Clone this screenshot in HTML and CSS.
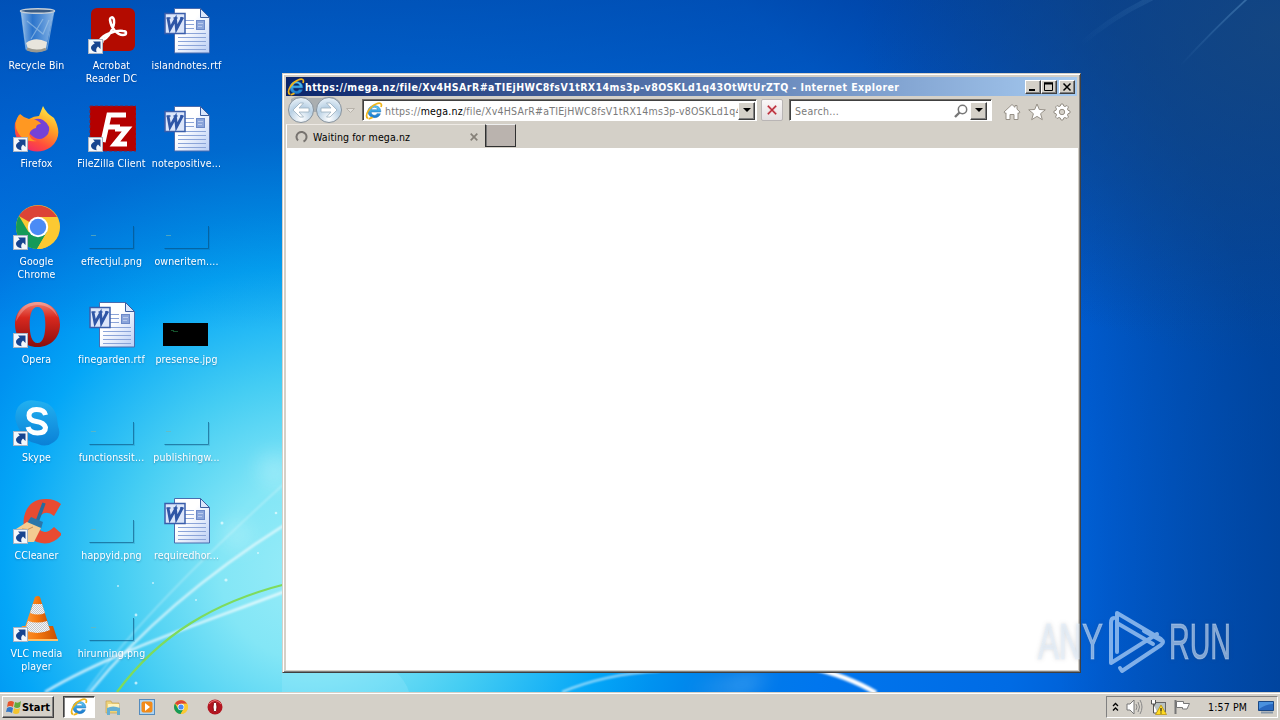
FILE: index.html
```html
<!DOCTYPE html>
<html lang="en">
<head>
<meta charset="utf-8">
<title>Desktop</title>
<link rel="stylesheet" href="styles.css">
</head>
<body>
<svg class="defs" width="0" height="0" aria-hidden="true">
  <defs>
    <linearGradient id="gPaper" x1="0" y1="0" x2="1" y2="1"><stop offset=".4" stop-color="#fff"/><stop offset="1" stop-color="#b9cdf5"/></linearGradient>
    <linearGradient id="gFox" x1=".8" y1="0" x2=".3" y2="1"><stop offset="0" stop-color="#fff04a"/><stop offset=".4" stop-color="#ffa126"/><stop offset=".75" stop-color="#ff4d3c"/><stop offset="1" stop-color="#f0286a"/></linearGradient>
    <linearGradient id="gOpera" x1="0" y1="0" x2="0" y2="1"><stop offset="0" stop-color="#f08070"/><stop offset=".35" stop-color="#d8281e"/><stop offset="1" stop-color="#8a0d0d"/></linearGradient>
    <linearGradient id="gSkype" x1="0" y1="0" x2="0" y2="1"><stop offset="0" stop-color="#22b0f0"/><stop offset="1" stop-color="#0a80d6"/></linearGradient>
    <linearGradient id="gBin" x1="0" y1="0" x2="1" y2="0"><stop offset="0" stop-color="#c4def5" stop-opacity=".8"/><stop offset=".35" stop-color="#4a8bd6" stop-opacity=".6"/><stop offset="1" stop-color="#b4d4f2" stop-opacity=".8"/></linearGradient>
    <linearGradient id="gCone" x1="0" y1="0" x2="1" y2="0"><stop offset="0" stop-color="#ffa040"/><stop offset=".5" stop-color="#f57a10"/><stop offset="1" stop-color="#c84e00"/></linearGradient>
    <radialGradient id="gNav" cx=".5" cy=".85" r=".8"><stop offset="0" stop-color="#fff"/><stop offset=".6" stop-color="#b8d0e4"/><stop offset="1" stop-color="#e4eef6"/></radialGradient>
    <linearGradient id="gIE" x1="0" y1="0" x2="0" y2="1"><stop offset="0" stop-color="#5fd0f8"/><stop offset="1" stop-color="#1474cc"/></linearGradient>
    <pattern id="dither" width="2" height="2" patternUnits="userSpaceOnUse"><rect width="2" height="2" fill="#f6f6f6"/><rect width="1" height="1" fill="#c4c8cc"/><rect x="1" y="1" width="1" height="1" fill="#c4c8cc"/></pattern>

    <symbol id="shortcut" viewBox="0 0 15 15"><rect x=".5" y=".5" width="14" height="14" fill="#f4f7fb" stroke="#a9b4c4"/><path d="M5 2.500h7.500V10L10 7.600Q7.300 9.800 8.600 13.300 3.800 12.800 3 9.300 2.700 6.500 6.800 4.600z" fill="#17448f"/></symbol>
    <symbol id="word" viewBox="0 0 48 48">
      <path d="M11.500 1.500h26l9 9v35.500h-35z" fill="url(#gPaper)" stroke="#4a6cae"/>
      <path d="M37.500 1.500v9h9z" fill="#dbe6fb" stroke="#3d5e9f"/>
      <path d="M15 26.500h28M15 30.500h28M15 34.500h28M15 38.500h28M15 42.500h28M22 13.500h9M22 17.500h9M22 21.500h9" stroke="#8ba4d8"/>
      <rect x="33.500" y="13.500" width="8" height="9" fill="#8ba5da" stroke="#6b88c8"/>
      <path d="M35 16.500h5M35 19.500h4" stroke="#b9c9ec"/>
      <rect x="2" y="6.500" width="20" height="20" fill="#dce6fa" stroke="#3a5eab" stroke-width="1.500"/>
      <path d="M5 11l2 11L12.500 12l1 10L19.500 10.500" fill="none" stroke="#2f56a6" stroke-width="2.800"/><path d="M3.500 11h4M10.500 11h4M17 11h3.500" stroke="#2f56a6" stroke-width="1.500"/>
    </symbol>
    <symbol id="thumb" viewBox="0 0 48 48"><path d="M1.500 45.500H45.500V23" fill="none" stroke="#084b78" stroke-opacity=".6"/><path d="M2 46.500h44.500V24" fill="none" stroke="#084b78" stroke-opacity=".15"/><path d="M3 32.500h5" stroke="#77b5ad" stroke-opacity=".65"/></symbol>
    <symbol id="chrome" viewBox="0 0 44 44">
      <circle cx="22" cy="22" r="22" fill="#fbc933"/>
      <path d="M22 22L3 11A22 22 0 0 1 41 12H22z" fill="#dc4437"/>
      <path d="M3 11A22 22 0 0 0 21 44L31.500 26 22 22 12.500 27z" fill="#159a58"/>
      <path d="M22 12h19a22 22 0 0 1-20 32L31 27z" fill="#fbc933"/>
      <circle cx="22" cy="22" r="10.200" fill="#fff"/><circle cx="22" cy="22" r="8.200" fill="#4b8bf5"/>
    </symbol>
    <symbol id="opera" viewBox="0 0 46 46"><path d="M23 0c14 0 23 10 23 23s-9 23-23 23S0 36 0 23 9 0 23 0zm0 5c-6 0-8 8-8 18s2 19 8 19 8-9 8-19-2-18-8-18z" fill="url(#gOpera)" fill-rule="evenodd"/><path d="M23 0C10 0 2 9 1 20 8 8 12 4 23 3c9 0 16 4 21 13C41 6 33 0 23 0z" fill="#fff" opacity=".25"/></symbol>
    <symbol id="ie" viewBox="0 0 18 18">
      <path d="M15.800 10H6.200c.1 3.500 4.500 4.300 5.700 1.700h3.500C13.800 17.600 3 17 3 9.500 3 1.500 16 1.500 15.800 10zM6.300 7.700h6.200c-.5-3.200-5.600-3.200-6.200 0z" fill="url(#gIE)" stroke="#1c73b8" stroke-width=".5"/>
      <path d="M2.800 16.500C-1 13 5 4.500 11 2c4-1.800 6.500-.8 5 3M3.500 16.500c1.500.3 3-.5 4-1.200" fill="none" stroke="#efb419" stroke-width="1.700"/>
    </symbol>
  </defs>
</svg>

<main class="desktop">
  <svg class="wallpaper" viewBox="0 0 1280 692" width="1280" height="692" aria-hidden="true">
    <defs>
      <filter id="soft" x="-20%" y="-20%" width="140%" height="140%"><feGaussianBlur stdDeviation=".8"/></filter>
      <filter id="haze" x="-50%" y="-50%" width="200%" height="200%"><feGaussianBlur stdDeviation="10"/></filter>
      <linearGradient id="gRay" x1="0" y1="1" x2="1" y2="0"><stop offset="0" stop-color="#79b6e6" stop-opacity="0"/><stop offset="1" stop-color="#79b6e6" stop-opacity=".35"/></linearGradient>
    </defs>
    <g fill="none" stroke="#fff" filter="url(#soft)">
      <path d="M45 692C110 653 205 622 286 591" stroke-width="2.600" opacity=".75"/>
      <path d="M90 692C140 630 205 575 286 524" stroke-width="2.400" opacity=".7"/>
      <path d="M86 692C130 630 200 560 286 482" stroke-width="1.300" opacity=".4"/>
      <path d="M562 692Q605 674 660 671" stroke-width="2" opacity=".65"/>
      <path d="M808 667Q848 676 876 693" stroke-width="4.500"/>
    </g>
    <path d="M117 692C160 634 215 602 286 584" fill="none" stroke="#7edb5c" stroke-width="2.200"/>
    <path d="M282 671h113q11 10 14 21h-127z" fill="#b5f0ff" opacity=".2"/>
    <g fill="#dffcff" filter="url(#haze)" opacity=".3"><circle cx="274" cy="470" r="17"/><circle cx="237" cy="535" r="14"/><path d="M690 692q30-10 80-20l-20 20z"/></g>
    <g fill="#effdff" opacity=".7"><circle cx="222" cy="523" r="1.500"/><circle cx="276" cy="513" r="1.300"/><circle cx="136" cy="615" r="1.400"/><circle cx="226" cy="580" r="1.600"/><circle cx="118" cy="586" r="1"/><circle cx="153" cy="583" r="1"/><circle cx="136" cy="683" r="1.500"/><circle cx="258" cy="553" r="1"/><circle cx="196" cy="600" r="1"/></g>
    <path d="M1180 66Q1215 28 1248-2" fill="none" stroke="url(#gRay)" stroke-width="1.800"/>
    <path d="M1080 45Q1110 18 1152-2" fill="none" stroke="url(#gRay)" stroke-width="5" opacity=".35"/>
  </svg>

  <section class="icons">
    <div class="item"><svg class="pic" viewBox="0 0 48 48"><path d="M8 4l5 38q10 5 20 0L41 4z" fill="url(#gBin)"/><path d="M13 36q9-7 21-1l-1 7q-10 4-18 0z" fill="#e8e5dc"/><path d="M8 4l5 38q10 5 21 0L41 4M14 14l16 13 6-14M18 32l12-20" fill="none" stroke="#a7c9e8" stroke-width="1.200" opacity=".6"/><ellipse cx="24.500" cy="4" rx="17" ry="2.300" fill="#3a5b83" stroke="#c5cfd8" stroke-width="1.500"/><path d="M14 42q10 4 19 0" fill="none" stroke="#9b998f" stroke-width="3"/></svg><span>Recycle Bin</span></div>
    <div class="item"><svg class="pic" viewBox="0 0 48 48"><path d="M9 22Q3 13 7 9q4 4 9 5 5-3 10-3l4-10q3 7 11 12 10 18-3 29-14 9-27 0Q0 34 2 18q2-5 5-6z" fill="url(#gFox)"/><path d="M17 19q5-8 13-4 9 6 5 14-8 10-18 0z" fill="#7542d7"/><path d="M3 23q-1-8 3-13 4 6 10 5 8-2 12 4-5 0-5 4-5 1-7 6 2 7 8 7-16 2-21-13z" fill="#ff9822"/></svg><svg class="link"><use href="#shortcut"/></svg><span>Firefox</span></div>
    <div class="item"><svg class="pic" viewBox="0 0 48 48"><use href="#chrome" x="3" y="2" width="44" height="44"/></svg><svg class="link"><use href="#shortcut"/></svg><span>Google<br>Chrome</span></div>
    <div class="item"><svg class="pic" viewBox="0 0 48 48"><use href="#opera" x="2" y="1" width="45" height="45"/></svg><svg class="link"><use href="#shortcut"/></svg><span>Opera</span></div>
    <div class="item"><svg class="pic" viewBox="0 0 48 48"><path d="M5 8Q12-1 24 2q17 1 20 17l1 8q4 10-4 16-8 6-16 2Q11 43 6 30-1 17 5 8z" fill="url(#gSkype)"/><path d="M32.500 16q-1-5.500-9-5.500-7.500 0-7.500 6 0 5 7.500 6t9 6q0 5.500-8 5.500-8 0-9.500-6" fill="none" stroke="#fff" stroke-width="5"/></svg><svg class="link"><use href="#shortcut"/></svg><span>Skype</span></div>
    <div class="item"><svg class="pic" viewBox="0 0 48 48"><path d="M48 7l-7 12q-7-6-13-1-7 6-2 14 6 7 15-2l8 7Q39 50 24 45 8 39 11 20 15 2 33 2q9 0 15 5z" fill="#e84b32"/><path d="M31 6L24 25" stroke="#286c9d" stroke-width="3.500"/><path d="M18 20l12 5-2 7-14-6z" fill="#2b76a9"/><path d="M14 25l14 6-7 14H7L3 32z" fill="#f4cc91"/><path d="M9 32q6 2 11-2" fill="none" stroke="#c88d56"/></svg><svg class="link"><use href="#shortcut"/></svg><span>CCleaner</span></div>
    <div class="item"><svg class="pic" viewBox="0 0 48 48"><path d="M9 31h31l5 15H3z" fill="url(#gCone)"/><path d="M22 2q3-2 5 0l10 33q-13 8-26 0z" fill="url(#gCone)"/><path d="M20 9h9l3 9q-7 3-15 0zM15 26q9 3 19 0l3 9q-13 6-25 0z" fill="url(#dither)"/><path d="M4 45h41" stroke="#ffc169" stroke-width="2"/></svg><svg class="link"><use href="#shortcut"/></svg><span>VLC media<br>player</span></div>

    <div class="item"><svg class="pic" viewBox="0 0 48 48"><rect x="3" y="1" width="44" height="43" rx="6" fill="#b30b00"/><path d="M14 33c6-1 13-13 12-20-1-4-4-3-4 0 1 8 7 15 13 15 4 0 4-4 0-4-8-1-20 4-23 9-2 4 1 5 3 1" fill="none" stroke="#fff" stroke-width="2.500" stroke-linejoin="round"/></svg><svg class="link"><use href="#shortcut"/></svg><span>Acrobat<br>Reader DC</span></div>
    <div class="item"><svg class="pic" viewBox="0 0 48 48"><rect x="2" y="1" width="46" height="45" fill="#b40000" stroke="#7b2440" stroke-dasharray="3 2"/><path d="M15 37l6-27h17M18 22h14M27 24h12L27 39h12" fill="none" stroke="#fff" stroke-width="5.200"/></svg><svg class="link"><use href="#shortcut"/></svg><span>FileZilla Client</span></div>
    <div class="item"><svg class="pic"><use href="#thumb"/></svg><span>effectjul.png</span></div>
    <div class="item"><svg class="pic"><use href="#word"/></svg><span>finegarden.rtf</span></div>
    <div class="item"><svg class="pic"><use href="#thumb"/></svg><span>functionssit...</span></div>
    <div class="item"><svg class="pic"><use href="#thumb"/></svg><span>happyid.png</span></div>
    <div class="item"><svg class="pic"><use href="#thumb"/></svg><span>hirunning.png</span></div>

    <div class="item"><svg class="pic"><use href="#word"/></svg><span>islandnotes.rtf</span></div>
    <div class="item"><svg class="pic"><use href="#word"/></svg><span>notepositive...</span></div>
    <div class="item"><svg class="pic"><use href="#thumb"/></svg><span>owneritem....</span></div>
    <div class="item"><svg class="pic" viewBox="0 0 48 48"><path d="M0 22h45v23H0z"/><path d="M10 30.500h5M8 29.500h3" stroke="#14512b"/></svg><span>presense.jpg</span></div>
    <div class="item"><svg class="pic"><use href="#thumb"/></svg><span>publishingw...</span></div>
    <div class="item"><svg class="pic"><use href="#word"/></svg><span>requiredhor...</span></div>
  </section>

  <section class="window">
    <header class="titlebar">
      <svg width="18" height="18"><use href="#ie"/></svg>
      <h1>https://mega.nz/file/Xv4HSArR#aTIEjHWC8fsV1tRX14ms3p-v8OSKLd1q43OtWtUrZTQ - Internet Explorer</h1>
      <div class="controls">
        <button class="raised"><svg viewBox="0 0 14 12"><path d="M3 9h6" stroke="#000" stroke-width="2"/></svg></button>
        <button class="raised"><svg viewBox="0 0 14 12"><path d="M2.500 2.500h8v7h-8zM2 2h9" fill="none" stroke="#000"/><path d="M2 2.500h9" stroke="#000" stroke-width="2"/></svg></button>
        <button class="raised close"><svg viewBox="0 0 14 12"><path d="M3.500 2.500l7 7m0-7l-7 7" stroke="#000" stroke-width="1.500"/></svg></button>
      </div>
    </header>
    <div class="toolbar">
      <svg class="nav" width="74" height="28" viewBox="0 0 74 28">
        <path d="M4 3q7-5 17-1h14q12-4 18 4v10H4z" fill="#aaaeb0"/>
        <g fill="url(#gNav)" stroke="#87929c"><circle cx="14" cy="14" r="12.500"/><circle cx="42" cy="14" r="12.500"/></g>
        <g fill="#fff" stroke="#9aaebe" stroke-width=".8"><path d="M6 14l7-7h3.500L12 12h10v4H12l4.500 5H13z"/><path d="M50 14l-7-7h-3.500l4.500 5H34v4h10l-4.500 5H43z"/></g>
        <path d="M59.500 12.500h8l-4 4z" fill="#e4e1db" stroke="#b8b3ab"/>
      </svg>
      <div class="field address"><svg width="18" height="18"><use href="#ie"/></svg><span class="url">https://<b>mega.nz</b>/file/Xv4HSArR#aTIEjHWC8fsV1tRX14ms3p-v8OSKLd1q4</span><button class="raised drop"><svg viewBox="0 0 8 5"><path d="M0 0h8L4 4z"/></svg></button></div>
      <button class="stop"><svg viewBox="0 0 12 12"><path d="M1 1l10 10M11 1L1 11" stroke="#efafb4" stroke-width="3"/><path d="M1 1l10 10M11 1L1 11" stroke="#b62d3a" stroke-width="1.600"/></svg></button>
      <div class="field search"><span>Search...</span><svg width="14" height="14" viewBox="0 0 14 14"><circle cx="8.500" cy="5.500" r="4.200" fill="#fff" stroke="#777" stroke-width="1.500"/><path d="M5.500 8.500L1 13" stroke="#777" stroke-width="2.400"/></svg><button class="raised drop"><svg viewBox="0 0 8 5"><path d="M0 0h8L4 4z"/></svg></button></div>
      <div class="tools">
        <svg width="18" height="18" viewBox="0 0 18 18"><path d="M1 9l8-7.500 3 2.800V2.500h2v3.700L17 9l-1 1.500-1-.7V16.500h-4v-5H7v5H3V9.800l-1 .7z" fill="#fff" stroke="#969087"/></svg>
        <svg width="18" height="18" viewBox="0 0 18 18"><path d="M9 1l2.300 5.500 6 .3-4.700 3.900 1.700 6L9 13.400l-5.300 3.300 1.700-6L.7 6.800l6-.3z" fill="#fff" stroke="#969087"/></svg>
        <svg width="18" height="18" viewBox="0 0 18 18"><path d="M7.300 3L8 1h2l.7 2 1.300.5 2-1 1.500 1.500-1 2 .5 1.300 2 .7v2l-2 .7-.5 1.300 1 2-1.500 1.500-2-1-1.300.5-.7 2H8l-.7-2-1.300-.5-2 1L2.500 14l1-2-.5-1.300L1 10V8l2-.7.500-1.300-1-2L4 2.500l2 1z" fill="#fff" stroke="#969087"/><circle cx="9" cy="9" r="2.700" fill="#d4d0c8" stroke="#969087"/></svg>
      </div>
    </div>
    <div class="tabs">
      <div class="tab"><svg width="13" height="13" viewBox="0 0 13 13"><path d="M3 10.500A5 5 0 1 1 8.500 11.500" fill="none" stroke="#77736f" stroke-width="2"/></svg><span>Waiting for mega.nz</span><svg width="8" height="8" viewBox="0 0 8 8"><path d="M.7.700l6.600 6.600m0-6.600L.7 7.300" stroke="#858078" stroke-width="1.700"/></svg></div>
      <div class="newtab"></div>
    </div>
    <div class="page"></div>
  </section>

  <svg class="watermark" width="214" height="70" viewBox="0 0 214 70">
    <g class="mark-text"><text x="4" y="54" textLength="65" lengthAdjust="spacingAndGlyphs">ANY</text><text x="135" y="54" textLength="62" lengthAdjust="spacingAndGlyphs">RUN</text></g>
    <g class="mark-logo"><path d="M80 13Q77 13 77 18v40l46-29M83 47V8l44 26q4 3 0 6L88 66l-2-3M83 18l36 21M110 26l18 10"/></g>
  </svg>
</main>

<footer class="taskbar">
  <button class="raised start"><svg width="16" height="16" viewBox="0 0 16 16"><path d="M2 3q3-2 6 0L7 8Q4 6 1 8z" fill="#e6552b"/><path d="M9 3q3 2 6-1l-1 6q-3 2-6 0z" fill="#63aa3d"/><path d="M1 9q3-2 6 0l-1 5q-3-2-6-1z" fill="#3578c6"/><path d="M8 9q3 2 6 0l-1 5q-3 2-6 0z" fill="#f2c42e"/></svg>Start</button>
  <div class="quick">
    <div class="task active"><svg width="18" height="18"><use href="#ie"/></svg></div>
    <div class="task"><svg width="16" height="16" viewBox="0 0 16 16"><path d="M1 2h5l1 2h7v10H1z" fill="#edd37b" stroke="#c4a250" stroke-width=".7"/><path d="M3 5h11v5H3z" fill="#fff3bd"/><path d="M2 9q6-3 13 0v7h-3v-4H5v4H2z" fill="#66afd2"/></svg></div>
    <div class="task"><svg width="16" height="16" viewBox="0 0 16 16"><rect x=".5" y=".5" width="15" height="15" fill="#aed4f2" stroke="#548bbd"/><rect x="2.500" y="2.500" width="11" height="11" rx="2" fill="#f28b1a"/><path d="M6 4l5 4-5 4z" fill="#fff"/></svg></div>
    <div class="task"><svg width="14" height="14"><use href="#chrome"/></svg></div>
    <div class="task"><svg width="16" height="16" viewBox="0 0 16 16"><circle cx="8" cy="8" r="7.500" fill="#b31520"/><path d="M2 5q6-7 12 0" fill="none" stroke="#ed7779"/><ellipse cx="8" cy="8" rx="2" ry="5" fill="#fff" stroke="#861018"/></svg></div>
  </div>
  <div class="tray">
    <svg width="7" height="10" viewBox="0 0 7 10"><path d="M1 4l2.500-2.500L6 4M1 8.500L3.500 6 6 8.500" fill="none" stroke="#000" stroke-width="1.300"/></svg>
    <svg width="17" height="16" viewBox="0 0 17 16"><path d="M1 5h3l4-4v14l-4-4H1z" fill="#fff" stroke="#777"/><path d="M10 5q2 3 0 6M12 3q3 5 0 10M14 1q4 7 0 14" fill="none" stroke="#888"/></svg>
    <svg width="17" height="16" viewBox="0 0 17 16"><rect x="4.500" y="3.500" width="11" height="9" fill="#b9c2c1" stroke="#666"/><path d="M1.500 1v4h4V1M3.500 5v9h4" fill="#fff" stroke="#555"/><path d="M11 6l5.500 9.500h-11z" fill="#ffdb22" stroke="#b78b00" stroke-width=".7"/><path d="M11 9v3.500m0 1v1" stroke="#222" stroke-width="1.200"/></svg>
    <svg width="17" height="16" viewBox="0 0 17 16"><path d="M2.500 2.500h7v2h6L13 10H8.500V8.500h-6z" fill="#fff" stroke="#777"/><path d="M1.500 1v14" stroke="#777" stroke-width="2"/></svg>
    <span class="clock">1:57 PM</span>
    <svg width="16" height="14" viewBox="0 0 16 14"><path d="M.5 1.500h15v9H.5z" fill="#2868c0" stroke="#1b4884"/><path d="M1 2h14v2Q8 4 1 9z" fill="#4a91de"/><path d="M3 12.500h12" stroke="#8797a8" stroke-width="2"/></svg>
  </div>
</footer>
</body>
</html>
```
FILE: styles.css
```css
* { box-sizing: border-box; }
body {
  margin: 0;
  width: 1280px;
  height: 720px;
  overflow: hidden;
  display: flex;
  flex-direction: column;
  font-family: "DejaVu Sans Condensed", "DejaVu Sans", sans-serif;
  font-stretch: condensed;
  font-size: 10.500px;
  color: #000;
}
svg { display: block; flex: none; }
button { font: inherit; color: inherit; padding: 0; margin: 0; border-radius: 0; }
.defs { position: absolute; }
.desktop {
  position: relative;
  flex: none;
  height: 692px;
  overflow: hidden;
  background:
    radial-gradient(ellipse 420px 330px at 1280px 30px, rgba(24, 72, 126, .8), rgba(0, 65, 140, 0)),
    linear-gradient(180deg, rgba(0, 45, 125, .45), rgba(0, 50, 140, 0) 330px),
    linear-gradient(90deg, rgba(0, 64, 150, 0) 1060px, rgba(0, 60, 145, .5)),
    radial-gradient(circle at 310px 570px, #98ecf8 0, #83e6f6 90px, #45cdf3 190px, #04a6f7 305px, #0092f0 360px, #007de9 430px, #0076ee 520px, #006be4 710px, #005dd2 800px, #004dac 980px);
}
.wallpaper { position: absolute; left: 0; top: 0; }
.icons {
  position: absolute;
  left: -1px;
  top: 0;
  display: grid;
  grid-template-rows: repeat(7, 98px);
  grid-auto-columns: 75px;
  grid-auto-flow: column;
}
.item {
  position: relative;
  display: flex;
  flex-direction: column;
  align-items: center;
  gap: 4px;
  padding-top: 7px;
  color: #fff;
  line-height: 13px;
  letter-spacing: .13px;
  text-align: center;
  white-space: nowrap;
  text-shadow: 0 1px 2px rgba(0, 40, 90, .35);
}
.pic { width: 48px; height: 48px; }
.link { position: absolute; left: 14px; top: 39px; width: 15px; height: 15px; }
.window {
  position: absolute;
  left: 282px;
  top: 73px;
  width: 799px;
  height: 600px;
  display: flex;
  flex-direction: column;
  padding: 2px;
  background: #d4d0c8;
  border: 1px solid;
  border-color: #d4d0c8 #404040 #404040 #d4d0c8;
  box-shadow: inset 1px 1px #fff, inset -1px -1px #808080;
}
.titlebar {
  flex: none;
  display: flex;
  align-items: center;
  height: 19px;
  margin: 1px 1px 0;
  padding: 0 2px 0 1px;
  background: linear-gradient(90deg, #0a246a, #a6caf0);
}
.titlebar h1 {
  flex: 1;
  margin: 0;
  font-size: 10.500px;
  font-weight: bold;
  letter-spacing: .44px;
  color: #fff;
  white-space: nowrap;
}
.controls { display: flex; }
.raised {
  display: flex;
  align-items: center;
  justify-content: center;
  background: #d4d0c8;
  border: 1px solid;
  border-color: #fff #404040 #404040 #fff;
  box-shadow: inset -1px -1px #808080;
}
.controls .raised { width: 16px; height: 14px; }
.controls svg { width: 14px; height: 12px; }
.controls .close { margin-left: 2px; }
.toolbar {
  flex: none;
  display: flex;
  align-items: center;
  height: 28px;
  padding-left: 2px;
}
.field {
  display: flex;
  align-items: center;
  height: 22px;
  background: #fff;
  border: 1px solid;
  border-color: #6f6c67 #fff #fff #6f6c67;
  box-shadow: inset 1px 1px #404040;
  color: #7a7a7a;
}
.address { width: 395px; margin-left: 1px; padding: 1px 1px 0 2px; }
.url { flex: 1; width: 0; margin-left: 2px; white-space: nowrap; letter-spacing: .22px; }
.url b { font-weight: normal; color: #000; }
.drop { flex: none; width: 17px; height: 18px; }
.drop svg { width: 8px; height: 5px; }
.stop {
  display: flex;
  align-items: center;
  justify-content: center;
  width: 22px;
  height: 22px;
  margin-left: 4px;
  background: linear-gradient(#faf7f7, #e4e0e2);
  border: 1px solid #b9b5b5;
  border-radius: 2px;
}
.stop svg { width: 10px; height: 10px; }
.search { width: 203px; margin-left: 6px; padding: 1px 4px 0 5px; letter-spacing: .3px; }
.search span { flex: 1; }
.search .drop { margin-left: 2px; }
.tools { display: flex; gap: 7px; margin: 3px 0 0 11px; }
.tabs { flex: none; display: flex; height: 24px; margin-left: 1px; }
.tab {
  display: flex;
  align-items: center;
  width: 199px;
  padding: 0 7px 0 8px;
  border-left: 1px solid #fff;
  border-top: 1px solid #eeeae5;
}
.tab span { flex: 1; margin-left: 5px; letter-spacing: .1px; }
.newtab {
  width: 31px;
  height: 23px;
  background: #bab3ae;
  border: 1px solid #303030;
  border-top-color: #eee;
  box-shadow: inset 1px 0 #777;
}
.page { flex: 1; margin: 0 0 0 1px; background: #fff; }
.watermark { position: absolute; left: 1034px; top: 605px; }
.mark-text {
  font: 50px "Liberation Sans Narrow", "Liberation Sans", sans-serif;
  fill: rgba(225, 238, 250, .57);
  stroke: rgba(225, 238, 250, .4);
  stroke-width: 1;
  filter: drop-shadow(0 0 2px rgba(50, 60, 80, .3));
}
.mark-logo {
  fill: none;
  stroke: rgba(170, 205, 245, .75);
  stroke-width: 4;
  stroke-linecap: round;
  stroke-linejoin: round;
}
.taskbar {
  flex: none;
  display: flex;
  height: 28px;
  padding: 3px 2px 1px;
  background: #d4d0c8;
  border-top: 1px solid #d4d0c8;
  box-shadow: inset 0 1px #fff;
}
.start { width: 52px; height: 22px; gap: 0; font-weight: bold; font-size: 11px; }
.quick { display: flex; gap: 2px; margin-left: 9px; }
.task { display: flex; align-items: center; justify-content: center; width: 32px; height: 22px; }
.active { background: #fff; border: 1px solid; border-color: #404040 #fff #fff #404040; box-shadow: inset 1px 1px #808080; }
.tray {
  display: flex;
  align-items: center;
  gap: 7px;
  width: 172px;
  height: 22px;
  margin-left: auto;
  padding-left: 5px;
  border: 1px solid;
  border-color: #808080 #fff #fff #808080;
}
.clock { margin: 0 4px 0 10px; white-space: nowrap; letter-spacing: .15px; }
```
